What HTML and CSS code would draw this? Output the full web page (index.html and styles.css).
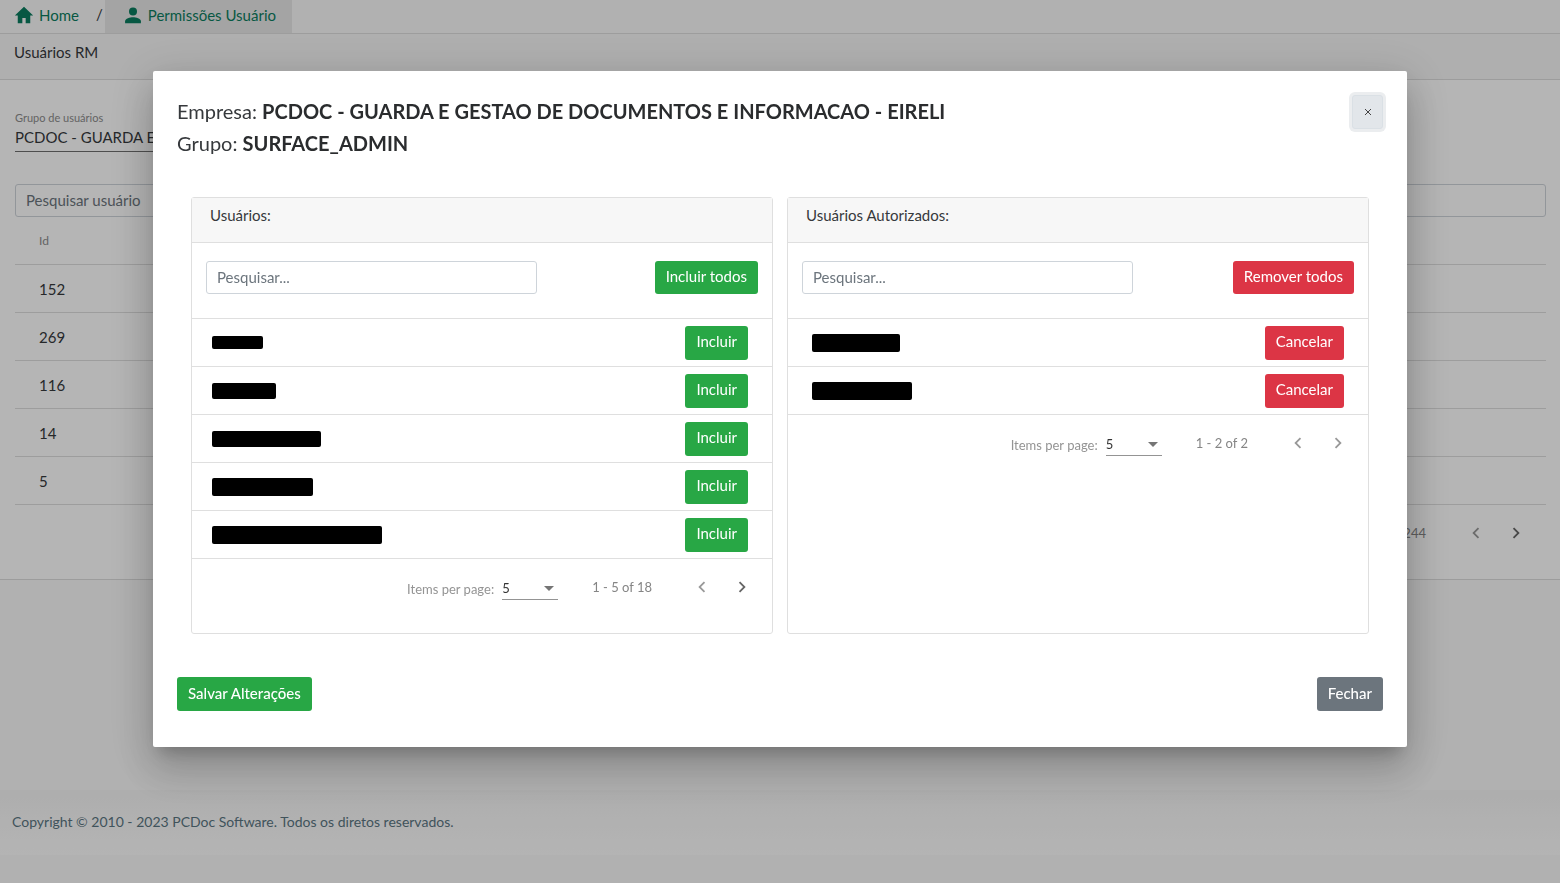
FILE: index.html
```html
<!DOCTYPE html>
<html lang="pt-BR">
<head>
<meta charset="utf-8">
<title>Permissões Usuário</title>
<link rel="stylesheet" href="styles.css">
</head>
<body>
<div class="page">
  <nav class="crumbs">
    <a class="crumb" href="#"><svg class="icon" viewBox="0 0 24 24"><path d="M10 22v-6.500h4V22h5.500v-9.500H23L12 2 1 12.500h3.500V22z"/></svg>Home</a>
    <span class="crumb-sep">/</span>
    <a class="crumb crumb-active" href="#"><svg class="icon" viewBox="0 0 24 24"><circle cx="12" cy="7.800" r="4.800"/><path d="M2.500 22v-2.500c0-3 6-4.700 9.500-4.700s9.500 1.700 9.500 4.700V22z"/></svg>Permissões Usuário</a>
  </nav>
  <header class="page-head">Usuários RM</header>
  <main class="page-body">
    <label class="field-label" for="group">Grupo de usuários</label>
    <select class="group-select" id="group"><option>PCDOC - GUARDA E GESTAO</option></select>
    <input class="input page-search" type="text" placeholder="Pesquisar usuário" aria-label="Pesquisar usuário">
    <table class="ids">
      <thead><tr><th>Id</th></tr></thead>
      <tbody>
        <tr><td>152</td></tr>
        <tr><td>269</td></tr>
        <tr><td>116</td></tr>
        <tr><td>14</td></tr>
        <tr><td>5</td></tr>
      </tbody>
    </table>
    <div class="pager">
      <span class="range">1 - 5 of 244</span>
      <button class="nav-btn off" aria-label="Página anterior"><svg class="chev" viewBox="0 0 24 24"><path d="M15.410 7.410 14 6l-6 6 6 6 1.410-1.410L10.830 12z"/></svg></button>
      <button class="nav-btn" aria-label="Próxima página"><svg class="chev" viewBox="0 0 24 24"><path d="M10 6 8.590 7.410 13.170 12l-4.580 4.590L10 18l6-6z"/></svg></button>
    </div>
  </main>
  <footer class="page-foot">Copyright © 2010 - 2023 PCDoc Software. Todos os diretos reservados.</footer>
</div>

<div class="overlay">
  <section class="dialog" role="dialog" aria-modal="true" aria-labelledby="dlg-title">
    <div class="dialog-head">
      <h1 class="title" id="dlg-title">Empresa: <b>PCDOC - GUARDA E GESTAO DE DOCUMENTOS E INFORMACAO - EIRELI</b><br>Grupo: <b>SURFACE_ADMIN</b></h1>
      <button class="close" aria-label="Fechar janela"><svg class="cross" viewBox="0 0 8 8"><path d="M1 1l6 6M7 1L1 7"/></svg></button>
    </div>
    <div class="cards">
      <div class="card">
        <h2 class="card-head">Usuários:</h2>
        <div class="tools">
          <input class="input" type="text" placeholder="Pesquisar..." aria-label="Pesquisar usuários">
          <button class="btn green">Incluir todos</button>
        </div>
        <table class="users">
          <tr><td><span class="mask low" style="width:51px"></span></td><td class="act"><button class="btn green">Incluir</button></td></tr>
          <tr><td><span class="mask mid" style="width:64px"></span></td><td class="act"><button class="btn green">Incluir</button></td></tr>
          <tr><td><span class="mask mid" style="width:109px"></span></td><td class="act"><button class="btn green">Incluir</button></td></tr>
          <tr><td><span class="mask tall" style="width:101px"></span></td><td class="act"><button class="btn green">Incluir</button></td></tr>
          <tr><td><span class="mask tall" style="width:170px"></span></td><td class="act"><button class="btn green">Incluir</button></td></tr>
        </table>
        <div class="pager">
          <label class="per" for="per1">Items per page:</label>
          <span class="per-box"><select class="per-select" id="per1"><option>5</option></select></span>
          <span class="range">1 - 5 of 18</span>
          <button class="nav-btn off" aria-label="Página anterior"><svg class="chev" viewBox="0 0 24 24"><path d="M15.410 7.410 14 6l-6 6 6 6 1.410-1.410L10.830 12z"/></svg></button>
          <button class="nav-btn" aria-label="Próxima página"><svg class="chev" viewBox="0 0 24 24"><path d="M10 6 8.590 7.410 13.170 12l-4.580 4.590L10 18l6-6z"/></svg></button>
        </div>
      </div>
      <div class="card">
        <h2 class="card-head">Usuários Autorizados:</h2>
        <div class="tools">
          <input class="input" type="text" placeholder="Pesquisar..." aria-label="Pesquisar usuários autorizados">
          <button class="btn red">Remover todos</button>
        </div>
        <table class="users allowed">
          <tr><td><span class="mask tall" style="width:88px"></span></td><td class="act"><button class="btn red">Cancelar</button></td></tr>
          <tr><td><span class="mask tall" style="width:100px"></span></td><td class="act"><button class="btn red">Cancelar</button></td></tr>
        </table>
        <div class="pager">
          <label class="per" for="per2">Items per page:</label>
          <span class="per-box"><select class="per-select" id="per2"><option>5</option></select></span>
          <span class="range">1 - 2 of 2</span>
          <button class="nav-btn off" aria-label="Página anterior"><svg class="chev" viewBox="0 0 24 24"><path d="M15.410 7.410 14 6l-6 6 6 6 1.410-1.410L10.830 12z"/></svg></button>
          <button class="nav-btn off" aria-label="Próxima página"><svg class="chev" viewBox="0 0 24 24"><path d="M10 6 8.590 7.410 13.170 12l-4.580 4.590L10 18l6-6z"/></svg></button>
        </div>
      </div>
    </div>
    <div class="dialog-foot">
      <button class="btn green strong">Salvar Alterações</button>
      <button class="btn gray strong">Fechar</button>
    </div>
  </section>
</div>
</body>
</html>
```
FILE: styles.css
```css
* { box-sizing: border-box; }
body {
  margin: 0;
  min-height: 100vh;
  background: #fafafa;
  color: #36393c;
  font: 400 15px/22px Lato, "Open Sans", sans-serif;
}
button, input, select { font: inherit; color: inherit; }

.crumbs {
  display: flex;
  align-items: stretch;
  height: 34px;
  background: #fafafa;
  border-bottom: 1px solid #dedede;
}
.crumb {
  display: flex;
  align-items: center;
  gap: 5px;
  padding: 0 15px 4px 14px;
  color: #0b7d5f;
  text-decoration: none;
}
.crumb-active { background: #e7e7e7; padding: 0 16px 4px 18px; }
.crumb-sep { padding: 3px 2px 0; }
.icon { width: 20px; height: 20px; fill: currentColor; }
.page-head {
  height: 46px;
  padding: 7px 14px;
  background: #f7f7f7;
  border-bottom: 1px solid #dcdcdc;
}
.page-body {
  padding: 30px 14px 18px 15px;
  background: #fff;
  border-bottom: 1px solid #dcdcdc;
}
.field-label { display: block; font-size: 11px; line-height: 16px; color: #8c8c8c; }
.group-select {
  display: block;
  width: 320px;
  height: 26px;
  padding: 0 0 4px;
  border: 0;
  border-bottom: 1px solid #6f6f6f;
  background: transparent;
  appearance: none;
}
.input {
  display: block;
  height: 33px;
  padding: 0 10px 2px;
  border: 1px solid #ced4da;
  border-radius: 3px;
  background: #fff;
}
.input::placeholder { color: #6c757d; opacity: 1; }
.page-search { width: 100%; margin-top: 32px; }
.ids { width: 100%; border-collapse: separate; border-spacing: 0; }
.ids th, .ids td {
  height: 48px;
  padding: 0 24px;
  text-align: left;
  border-bottom: 1px solid #dedede;
}
.ids th { font-size: 12px; font-weight: 400; color: #8c8c8c; }
.page-foot {
  height: 65px;
  margin-top: 210px;
  padding: 21px 12px;
  font-size: 14px;
  color: #5b7682;
  background: linear-gradient(#f5f5f5, #fefefe);
}

.pager {
  display: flex;
  align-items: center;
  justify-content: flex-end;
  height: 56px;
  padding-right: 10px;
  font-size: 13px;
  color: #858585;
}
.per { padding-top: 4px; margin-right: 8px; color: #949494; }
.per-box { position: relative; width: 56px; margin-right: 34px; }
.per-box::after {
  content: "";
  position: absolute;
  right: 4px;
  top: 12px;
  border: 5px solid transparent;
  border-top-color: #757575;
  border-bottom: 0;
  pointer-events: none;
}
.per-select {
  display: block;
  width: 100%;
  height: 26px;
  padding: 3px 0 0;
  border: 0;
  border-bottom: 1px solid #949494;
  background: transparent;
  color: #333;
  appearance: none;
}
.range { margin-right: 30px; }
.nav-btn {
  display: flex;
  align-items: center;
  justify-content: center;
  width: 40px;
  height: 40px;
  padding: 0;
  border: 0;
  background: transparent;
  color: #666;
}
.nav-btn.off { color: #999; }
.chev { width: 22px; height: 22px; fill: currentColor; }

.overlay {
  position: fixed;
  inset: 0;
  padding: 71px 153px 0;
  background: rgba(0, 0, 0, .29);
}
.dialog {
  padding: 24px 24px 36px;
  border-radius: 2px;
  background: #fff;
  box-shadow: 0 11px 15px -7px rgba(0, 0, 0, .2), 0 24px 38px 3px rgba(0, 0, 0, .14), 0 9px 46px 8px rgba(0, 0, 0, .12);
}
.dialog-head {
  display: flex;
  align-items: flex-start;
  justify-content: space-between;
}
.title { margin: 0; font-size: 20px; font-weight: 400; line-height: 32px; }
.title b { color: #2a2c2e; }
.close {
  display: flex;
  align-items: center;
  justify-content: center;
  width: 31px;
  height: 34px;
  padding: 0;
  border: 1px solid #dae0e5;
  border-radius: 3px;
  background: #e2e6ea;
  box-shadow: 0 0 0 3px #ebedef;
}
.cross { width: 8px; height: 8px; stroke: #444; stroke-width: 1; }
.cards {
  display: grid;
  grid-template-columns: 1fr 1fr;
  gap: 14px;
  padding: 38px 14px 43px;
}
.card {
  padding-bottom: 18px;
  border: 1px solid #dfdfdf;
  border-radius: 3px;
}
.card-head {
  height: 45px;
  margin: 0;
  padding: 6px 18px;
  font-size: 15px;
  font-weight: 400;
  line-height: 22px;
  background: #f7f7f7;
  border-bottom: 1px solid #dfdfdf;
}
.tools {
  display: flex;
  justify-content: space-between;
  padding: 18px 14px 24px;
}
.tools .input { width: 60%; }
.btn {
  height: 34px;
  padding: 0 11px 4px;
  border: 0;
  border-radius: 3px;
  color: #fff;
  white-space: nowrap;
}
.tools .btn { height: 33px; }
.green { background: #28a745; }
.red { background: #dc3545; }
.gray { background: #6c757d; }
.strong { padding-bottom: 2px; font-weight: 500; }
.users { width: 100%; border-collapse: collapse; }
.users td {
  height: 48px;
  padding: 0 24px 0 20px;
  border-top: 1px solid #dfdfdf;
  border-bottom: 1px solid #dfdfdf;
}
.allowed td { padding-left: 24px; }
.users .act { text-align: right; }
.mask { display: block; border-radius: 2px; background: #000; }
.low { height: 13px; }
.mid { height: 16px; }
.tall { height: 18px; }
.dialog-foot { display: flex; justify-content: space-between; }
```
